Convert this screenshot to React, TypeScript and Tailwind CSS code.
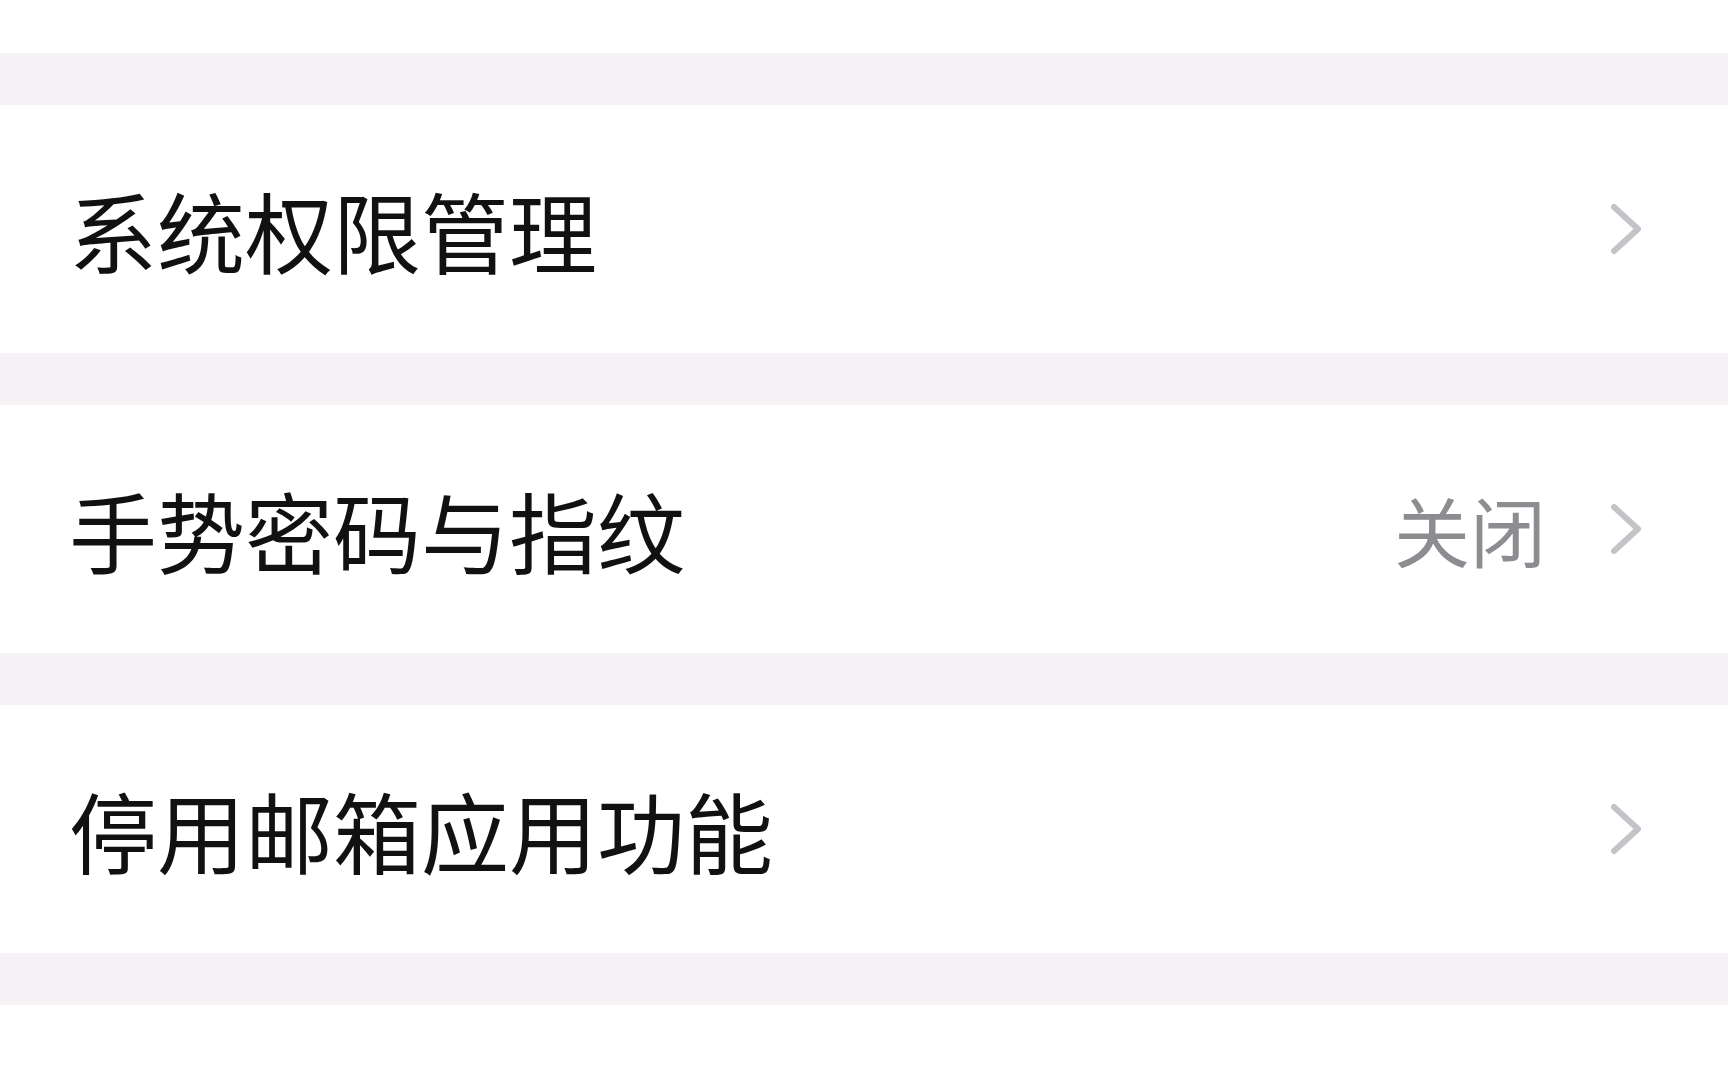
import { Fragment } from "react";

type Item = {
  label: string;
  value?: string;
};

const items: Item[] = [
  { label: "系统权限管理" },
  { label: "手势密码与指纹", value: "关闭" },
  { label: "停用邮箱应用功能" },
];

function Chevron() {
  return (
    <svg width="32" height="52" viewBox="0 0 32 52" fill="none" className="shrink-0">
      <polyline
        points="4,4 28,26 4,48"
        stroke="#c6c3c8"
        strokeWidth="6"
        strokeLinecap="round"
        strokeLinejoin="round"
      />
    </svg>
  );
}

function Divider() {
  return <div className="h-[52px] bg-[#f6f2f6]" />;
}

function Row({ item }: { item: Item }) {
  return (
    <div className="flex h-[248px] items-center justify-between bg-white pl-[69px] pr-[86px]">
      <span className="text-[88px] leading-none text-[#111111]">{item.label}</span>
      <div className="flex items-center gap-[64px]">
        {item.value && <span className="text-[76px] leading-none text-[#8e8b91]">{item.value}</span>}
        <Chevron />
      </div>
    </div>
  );
}

export default function App() {
  return (
    <div
      className="min-h-screen w-full bg-white"
      style={{ fontFamily: '"Noto Sans CJK SC", "Noto Sans", sans-serif' }}
    >
      <div className="h-[53px] bg-white" />
      {items.map((item) => (
        <Fragment key={item.label}>
          <Divider />
          <Row item={item} />
        </Fragment>
      ))}
      <Divider />
    </div>
  );
}
